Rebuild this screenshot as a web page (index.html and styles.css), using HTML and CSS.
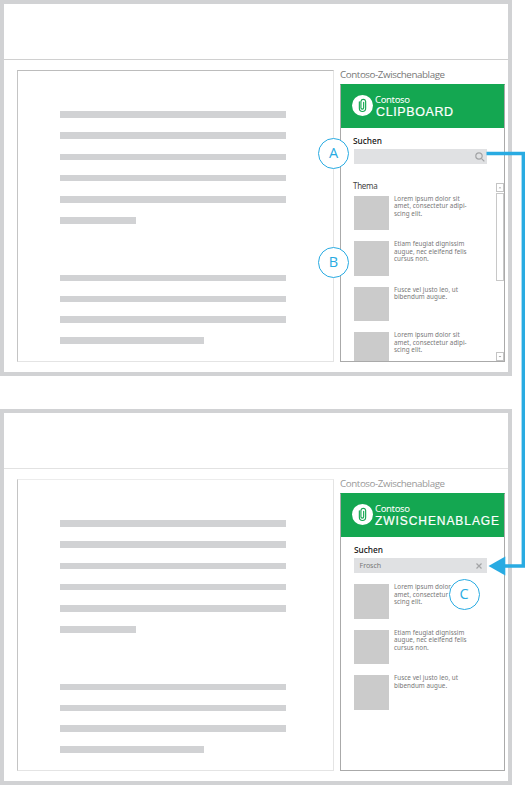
FILE: index.html
```html
<!DOCTYPE html>
<html lang="de">
<head>
<meta charset="utf-8">
<title>Contoso-Zwischenablage</title>
<link rel="stylesheet" href="styles.css">
</head>
<body>
<main class="stage">
  <section class="window first">
    <div class="ribbon"></div>
    <div class="workspace">
      <div class="document">
        <div class="paragraph"><i></i><i></i><i></i><i></i><i></i><i class="short"></i></div>
        <div class="paragraph second"><i></i><i></i><i></i><i class="medium"></i></div>
      </div>
      <aside class="pane">
        <h2>Contoso-Zwischenablage</h2>
        <div class="panel">
          <header class="brand">
            <svg class="logo" viewBox="0 0 20 20"><circle cx="10" cy="10" r="10"/><path d="M7 6.500v6.200a3 3 0 0 0 6 0V6a2.300 2.300 0 0 0-4.500 0v6.200a1.300 1.300 0 0 0 2.600 0V7"/></svg>
            <div><p class="company">Contoso</p><p class="product clipboard">CLIPBOARD</p></div>
          </header>
          <p class="label">Suchen</p>
          <div class="search"><span></span><svg class="lens" viewBox="0 0 10 10"><circle cx="4" cy="4" r="3.200"/><path d="M6.300 6.300 9.300 9.300"/></svg></div>
          <p class="topic">Thema</p>
          <div class="results">
            <article><b></b><p>Lorem ipsum dolor sit<br>amet, consectetur adipi-<br>scing elit.</p></article>
            <article><b></b><p>Etiam feugiat dignissim<br>augue, nec eleifend felis<br>cursus non.</p></article>
            <article><b></b><p>Fusce vel justo leo, ut<br>bibendum augue.</p></article>
            <article><b></b><p>Lorem ipsum dolor sit<br>amet, consectetur adipi-<br>scing elit.</p></article>
          </div>
          <div class="scrollbar">
            <div class="arrow"><svg viewBox="0 0 7 7"><path d="M2 4.500 3.500 2.800 5 4.500z"/></svg></div>
            <div class="thumb"></div>
            <div class="arrow down"><svg viewBox="0 0 7 7"><path d="M2 2.800h3L3.500 4.500z"/></svg></div>
          </div>
        </div>
      </aside>
    </div>
  </section>

  <section class="window last">
    <div class="ribbon"></div>
    <div class="workspace">
      <div class="document">
        <div class="paragraph"><i></i><i></i><i></i><i></i><i></i><i class="short"></i></div>
        <div class="paragraph second"><i></i><i></i><i></i><i class="medium"></i></div>
      </div>
      <aside class="pane">
        <h2>Contoso-Zwischenablage</h2>
        <div class="panel">
          <header class="brand">
            <svg class="logo" viewBox="0 0 20 20"><circle cx="10" cy="10" r="10"/><path d="M7 6.500v6.200a3 3 0 0 0 6 0V6a2.300 2.300 0 0 0-4.500 0v6.200a1.300 1.300 0 0 0 2.600 0V7"/></svg>
            <div><p class="company">Contoso</p><p class="product">ZWISCHENABLAGE</p></div>
          </header>
          <p class="label">Suchen</p>
          <div class="search"><span>Frosch</span><svg class="clear" viewBox="0 0 8 8"><path d="m1.500 1.500 5 5m0-5-5 5"/></svg></div>
          <div class="results">
            <article><b></b><p>Lorem ipsum dolor sit<br>amet, consectetur adipi-<br>scing elit.</p></article>
            <article><b></b><p>Etiam feugiat dignissim<br>augue, nec eleifend felis<br>cursus non.</p></article>
            <article><b></b><p>Fusce vel justo leo, ut<br>bibendum augue.</p></article>
          </div>
        </div>
      </aside>
    </div>
  </section>

  <svg class="connector" viewBox="0 0 525 785"><path class="wire" d="M486.500 153.500H523.300V566H504"/><path class="head" d="M488.500 566 505.300 556.500V575.500z"/></svg>
  <span class="badge a">A</span>
  <span class="badge b">B</span>
  <span class="badge c">C</span>
</main>
</body>
</html>
```
FILE: styles.css
```css
* { box-sizing: border-box; }
body { margin: 0; background: #fff; font-family: "Noto Sans", "Open Sans", sans-serif; }
p, h2 { margin: 0; font-weight: 400; white-space: nowrap; }
.stage { position: relative; width: 525px; height: 785px; display: flex; flex-direction: column; justify-content: space-between; overflow: hidden; }
.window { width: 511.5px; height: 376px; border: 4.400px solid #d1d2d4; }
.ribbon { height: 56px; border-bottom: 1px solid #d0d0d0; }
.last .ribbon { border-color: #e2e2e2; }
.workspace { display: flex; gap: 6px; padding: 10px 0 0 13px; }
.document { width: 317px; height: 292px; border: 1px solid #e4e4e4; border-top-color: #bcbcbc; border-left-color: #c4c4c4; padding: 40px 0 0 42px; }
.last .document { border-top-color: #ececec; }
.paragraph { display: flex; flex-direction: column; gap: 14.800px; }
.paragraph i { width: 226px; height: 6.500px; background: #d1d2d4; }
.paragraph.second { margin-top: 51px; gap: 14.200px; }
.paragraph .short { width: 76px; }
.paragraph .medium { width: 144px; }
.pane { width: 165px; height: 292px; display: flex; flex-direction: column; }
.pane h2 { height: 14px; font-family: "Open Sans", "Noto Sans", sans-serif; font-size: 9.800px; line-height: 10px; color: #777; letter-spacing: -.42px; }
.last h2 { color: #999; }
.panel { position: relative; height: 278px; border: 1px solid #aaa; border-top-color: #14a751; overflow: hidden; }
.brand { height: 43px; background: #14a751; color: #fff; display: flex; gap: 2px; padding: 10px 0 0 11px; }
.logo { width: 21px; height: 21px; flex: none; }
.logo circle { fill: #fff; }
.logo path { fill: none; stroke: #14a751; stroke-width: 1.100; stroke-linecap: round; }
.company { font-size: 9.500px; line-height: 10px; letter-spacing: -.35px; }
.product { font: 12px/14px "Liberation Sans", sans-serif; letter-spacing: .93px; -webkit-text-stroke: .2px #fff; }
.clipboard { font-size: 12.500px; padding-left: 1px; letter-spacing: .6px; }
.label { padding: 7px 0 0 12px; height: 21px; font-size: 8.300px; line-height: 11px; font-weight: 500; color: #111; }
.last .label { padding-left: 13px; }
.search { margin-left: 12.500px; width: 133px; height: 15px; background: #e0e1e3; display: flex; align-items: center; justify-content: space-between; padding: 0 2px 0 6px; font-size: 7px; color: #777; }
.lens { width: 10px; height: 10px; }
.clear { width: 8px; height: 8px; margin-right: 2px; }
.lens *, .clear * { fill: none; stroke: #a3a4a6; stroke-width: 1.200; }
.topic { margin: 17px 0 0 12px; height: 14.600px; font-size: 8px; line-height: 10px; color: #444; letter-spacing: -.3px; }
.results { display: flex; flex-direction: column; gap: 11px; margin-left: 13px; }
.last .results { margin-top: 11px; }
.results article { display: flex; gap: 5px; height: 34.500px; }
.results b { width: 35px; height: 34.500px; background: #cbcbcb; flex: none; }
.results p { font-size: 6.300px; line-height: 7.600px; letter-spacing: .04px; color: #777; margin-top: -1px; }
.scrollbar { position: absolute; right: 0; top: 98px; width: 8px; bottom: 0; display: flex; flex-direction: column; gap: 1px; }
.arrow { height: 9px; border: 1px solid #c4c4c4; flex: none; }
.arrow svg { display: block; width: 6px; height: 7px; }
.arrow path { fill: #999; }
.thumb { height: 88px; border: 1px solid #c8c8c8; }
.down { margin-top: auto; }
.connector { position: absolute; inset: 0; width: 525px; height: 785px; }
.wire { fill: none; stroke: #29abe2; stroke-width: 3.400; }
.head { fill: #29abe2; }
.badge { position: absolute; width: 31px; height: 31px; border: 1.500px solid #29abe2; border-radius: 50%; background: #fff; color: #29abe2; display: flex; align-items: center; justify-content: center; font: 400 14.500px/1 "Open Sans", "Noto Sans", sans-serif; }
.a { left: 318px; top: 138px; }
.b { left: 318px; top: 247px; }
.c { left: 448.500px; top: 578.500px; }
```
